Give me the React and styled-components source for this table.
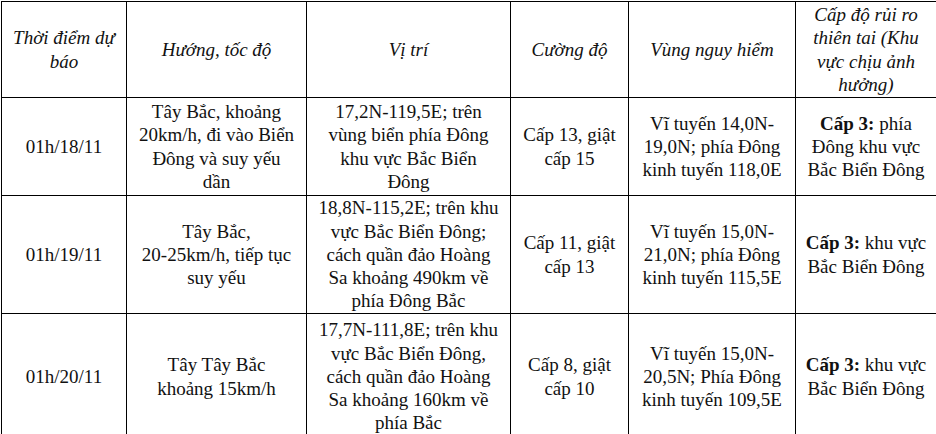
import React from "react";
import styled, { createGlobalStyle } from "styled-components";

const GlobalStyle = createGlobalStyle`
  html, body {
    margin: 0;
    padding: 0;
    background: #fff;
    overflow: hidden;
  }
`;

const Page = styled.div`
  padding: 1px 0 0 1px;
  width: 980px;
`;

const Table = styled.table`
  border-collapse: collapse;
  table-layout: fixed;
  width: 935px;
  font-family: "Liberation Serif", "Times New Roman", serif;
  font-size: 19px;
  line-height: 23.3px;
  color: #111;
`;

const Row = styled.tr`
  height: ${(p) => p.$h}px;
`;

const Cell = styled.td`
  border: 1px solid #000;
  padding: 0 2px;
  text-align: center;
  vertical-align: middle;
  white-space: nowrap;
  overflow: hidden;
`;

const HeadCell = styled(Cell).attrs({ as: "th" })`
  font-weight: normal;
  font-style: italic;
`;

const Strong = styled.b`
  font-weight: bold;
`;

const widths = [125, 180, 204, 118, 167, 141];

const lines = (arr) =>
  arr.map((l, i) => (
    <React.Fragment key={i}>
      {i > 0 && <br />}
      {l}
    </React.Fragment>
  ));

const rows = [
  {
    h: 98,
    time: "01h/18/11",
    dir: ["Tây Bắc, khoảng", "20km/h, đi vào Biển", "Đông và suy yếu", "dần"],
    pos: ["17,2N-119,5E; trên", "vùng biển phía Đông", "khu vực Bắc Biển", "Đông"],
    force: ["Cấp 13, giật", "cấp 15"],
    zone: ["Vĩ tuyến 14,0N-", "19,0N; phía Đông", "kinh tuyến 118,0E"],
    risk: [" phía", "Đông khu vực", "Bắc Biển Đông"],
  },
  {
    h: 118,
    time: "01h/19/11",
    dir: ["Tây Bắc,", "20-25km/h, tiếp tục", "suy yếu"],
    pos: [
      "18,8N-115,2E; trên khu",
      "vực Bắc Biển Đông;",
      "cách quần đảo Hoàng",
      "Sa khoảng 490km về",
      "phía Đông Bắc",
    ],
    force: ["Cấp 11, giật", "cấp 13"],
    zone: ["Vĩ tuyến 15,0N-", "21,0N; phía Đông", "kinh tuyến 115,5E"],
    risk: [" khu vực", "Bắc Biển Đông"],
  },
  {
    h: 126,
    time: "01h/20/11",
    dir: ["Tây Tây Bắc", "khoảng 15km/h"],
    pos: [
      "17,7N-111,8E; trên khu",
      "vực Bắc Biển Đông,",
      "cách quần đảo Hoàng",
      "Sa khoảng 160km về",
      "phía Bắc",
    ],
    force: ["Cấp 8, giật", "cấp 10"],
    zone: ["Vĩ tuyến 15,0N-", "20,5N; Phía Đông", "kinh tuyến 109,5E"],
    risk: [" khu vực", "Bắc Biển Đông"],
  },
];

export default function App() {
  return (
    <Page>
      <GlobalStyle />
      <Table>
        <colgroup>
          {widths.map((w, i) => (
            <col key={i} style={{ width: w }} />
          ))}
        </colgroup>
        <thead>
          <Row $h={96}>
            <HeadCell>{lines(["Thời điểm dự", "báo"])}</HeadCell>
            <HeadCell>Hướng, tốc độ</HeadCell>
            <HeadCell>Vị trí</HeadCell>
            <HeadCell>Cường độ</HeadCell>
            <HeadCell>Vùng nguy hiểm</HeadCell>
            <HeadCell>
              {lines(["Cấp độ rủi ro", "thiên tai (Khu", "vực chịu ảnh", "hưởng)"])}
            </HeadCell>
          </Row>
        </thead>
        <tbody>
          {rows.map((r) => (
            <Row key={r.time} $h={r.h}>
              <Cell>{r.time}</Cell>
              <Cell>{lines(r.dir)}</Cell>
              <Cell>{lines(r.pos)}</Cell>
              <Cell>{lines(r.force)}</Cell>
              <Cell>{lines(r.zone)}</Cell>
              <Cell>
                <Strong>Cấp 3:</Strong>
                {lines(r.risk)}
              </Cell>
            </Row>
          ))}
        </tbody>
      </Table>
    </Page>
  );
}
